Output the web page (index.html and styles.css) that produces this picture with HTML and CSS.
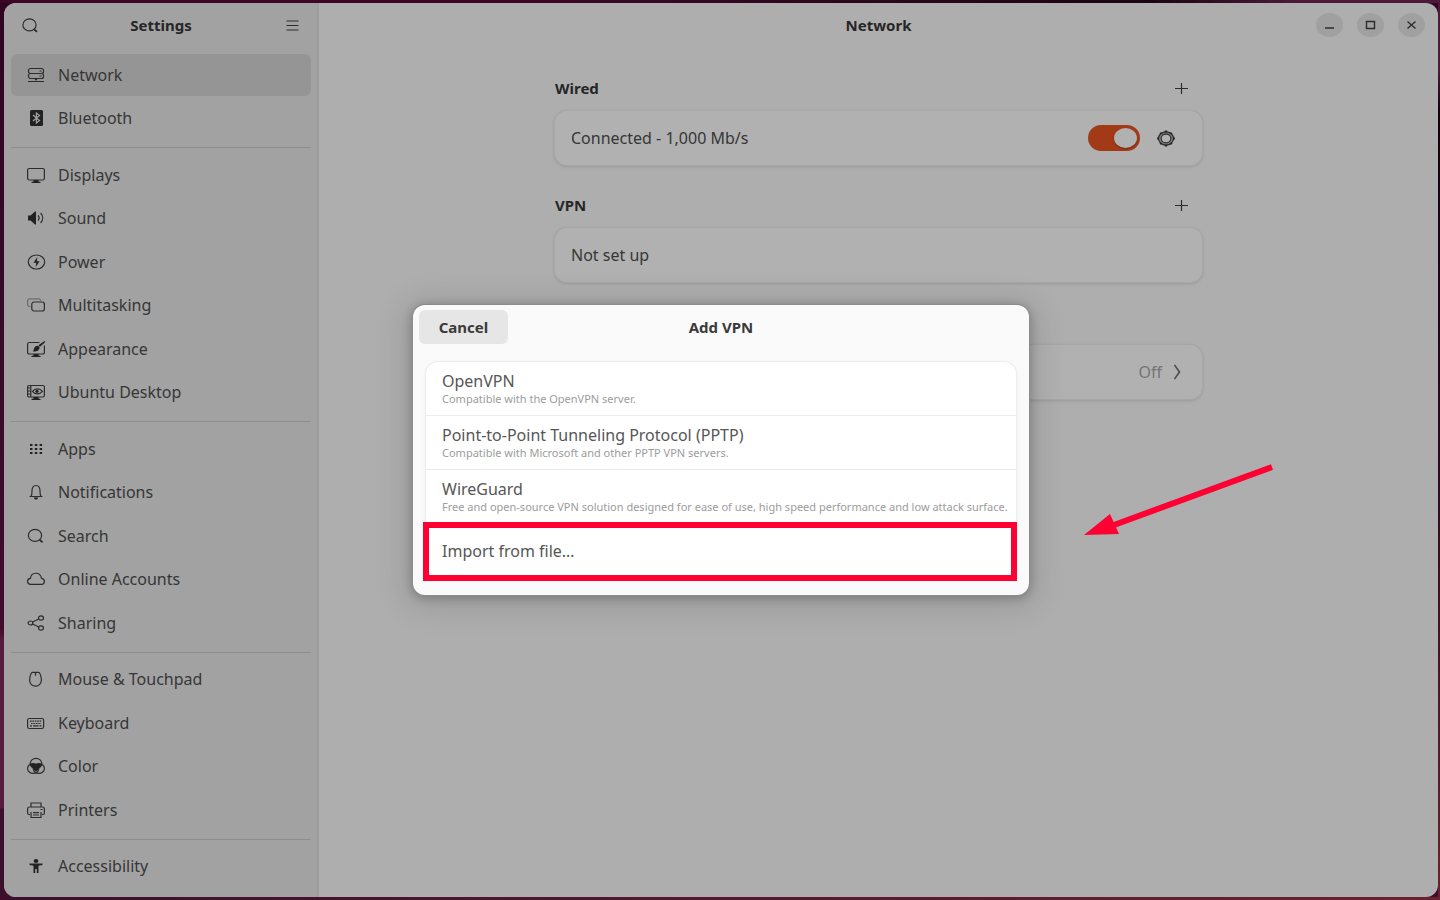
FILE: index.html
```
<!DOCTYPE html>
<html lang="en">
<head>
    <meta charset="UTF-8">
    <meta name="viewport" content="width=device-width, initial-scale=1.0">
    <title>Settings - Network</title>
    <link rel="stylesheet" href="styles.css">
</head>
<body>
    <div class="window">
        <aside class="sidebar">
            <header class="sidebar-header">
                <button class="icon-btn" aria-label="Search settings">
                    <svg class="icon" viewBox="0 0 20 20"><ellipse cx="9.5" cy="9.9" rx="6.6" ry="6"/><path d="M14 14.300l3 2.600" stroke-width="1.8"/></svg>
                </button>
                <h1>Settings</h1>
                <button class="icon-btn" aria-label="Main menu">
                    <svg class="icon" viewBox="0 0 20 20"><path d="M4.5 6h12M4.5 10.500h12M4.5 15h12"/></svg>
                </button>
            </header>
            <nav class="nav">
                <a class="nav-item active" href="#">
                    <svg class="icon" viewBox="0 0 20 20"><rect x="2.500" y="3.500" width="15" height="5" rx="2"/><rect x="2.500" y="8.500" width="15" height="5" rx="2"/><path d="M13.500 6h2M13.500 11h2M2 16.500h16"/><path class="solid" d="M8.500 14h3l-1.500 1.700z"/></svg>
                    Network
                </a>
                <a class="nav-item" href="#">
                    <svg class="icon" viewBox="0 0 20 20"><rect class="solid" x="4" y="2" width="13" height="16" rx="1.5"/><path class="knock" d="M7 7l6.5 5.5L10.4 15V5l3.1 2.5L7 13"/></svg>
                    Bluetooth
                </a>
                <hr>
                <a class="nav-item" href="#">
                    <svg class="icon" viewBox="0 0 20 20"><rect x="1.6" y="3.5" width="16.8" height="11.5" rx="1.8"/><path class="solid" d="M7.5 15h5v1.5l2 .5v1h-9v-1l2-.5z"/></svg>
                    Displays
                </a>
                <a class="nav-item" href="#">
                    <svg class="icon" viewBox="0 0 20 20"><path class="solid" d="M2 7.5h2.5L9 3.5h1v13H9l-4.500-4H2z"/><path d="M12 7.300c1.300 1.600 1.300 3.800 0 5.400M14.600 5c2.800 3 2.800 7 0 10"/></svg>
                    Sound
                </a>
                <a class="nav-item" href="#">
                    <svg class="icon" viewBox="0 0 20 20"><ellipse cx="10.500" cy="10" rx="8.200" ry="7"/><path class="solid" d="M11.300 5L7.500 10.800h2.700L9.800 15l3.700-5.800h-2.600z"/></svg>
                    Power
                </a>
                <a class="nav-item" href="#">
                    <svg class="icon" viewBox="0 0 20 20"><path class="faint" d="M4.500 11.500H3.600a2 2 0 0 1-2-2V5.800a2 2 0 0 1 2-2h9a2 2 0 0 1 2 2"/><rect x="5.800" y="7" width="12.600" height="9" rx="2.200"/></svg>
                    Multitasking
                </a>
                <a class="nav-item" href="#">
                    <svg class="icon" viewBox="0 0 20 20"><path d="M13.500 3.500H3.400a1.800 1.800 0 0 0-1.800 1.800v7.900A1.800 1.800 0 0 0 3.400 15h13.200a1.800 1.800 0 0 0 1.800-1.800V6.500"/><path class="solid" d="M7.500 15h5v1.500l2 .5v1h-9v-1l2-.5zM18.500 2l.8 1-5.300 4.800-1.600-1.500zM12 6.800l1.600 1.500c0 3-3 4.700-7 4.200 1.500-1 .8-2 1.600-3.600.8-1.500 2.200-2.200 3.800-2.100z"/></svg>
                    Appearance
                </a>
                <a class="nav-item" href="#">
                    <svg class="icon" viewBox="0 0 20 20"><rect x="1.600" y="3.500" width="16.800" height="11.500" rx="1.500"/><path d="M4.800 3.500V15M2 6h3M2 9h3M2 12h3M6.500 9.300c2.300-3.300 7.200-3.300 10 0-2.800 3.300-7.700 3.300-10 0z"/><circle class="solid" cx="11" cy="9.300" r="1.600"/><path class="solid" d="M7.500 15h5v1.500l2 .5v1h-9v-1l2-.5z"/></svg>
                    Ubuntu Desktop
                </a>
                <hr>
                <a class="nav-item" href="#">
                    <svg class="icon" viewBox="0 0 20 20"><path class="solid" d="M4 5h2.500v2H4zM8.800 5h2.500v2H8.800zM13.600 5h2.500v2h-2.500zM4 9h2.500v2H4zM8.800 9h2.500v2H8.800zM13.600 9h2.500v2h-2.500zM4 13h2.500v2H4zM8.800 13h2.500v2H8.800zM13.600 13h2.500v2h-2.500z"/></svg>
                    Apps
                </a>
                <a class="nav-item" href="#">
                    <svg class="icon" viewBox="0 0 20 20"><path d="M3.500 14.500h13M5 14.300c1-1.300 1-2.800 1-5.300C6 5.500 7.500 3.500 10 3.500S14 5.500 14 9c0 2.500 0 4 1 5.300"/><path class="solid" d="M7.800 15.500h4.400c-.3 1.400-1.100 2-2.200 2s-1.900-.6-2.200-2z"/></svg>
                    Notifications
                </a>
                <a class="nav-item" href="#">
                    <svg class="icon" viewBox="0 0 20 20"><ellipse cx="9" cy="9.400" rx="6.600" ry="6"/><path d="M13.600 13.800l3 2.600" stroke-width="1.800"/></svg>
                    Search
                </a>
                <a class="nav-item" href="#">
                    <svg class="icon" viewBox="0 0 20 20"><path d="M4.800 15.300c-4.200 0-4.400-5.600-.3-6 .5-6.500 9.800-7 11 0 4 .5 3.800 6 0 6z"/></svg>
                    Online Accounts
                </a>
                <a class="nav-item" href="#">
                    <svg class="icon" viewBox="0 0 20 20"><ellipse cx="4.500" cy="10" rx="2.300" ry="2"/><ellipse cx="15" cy="5" rx="2.500" ry="2.100"/><ellipse cx="15" cy="15" rx="2.500" ry="2.100"/><path d="M6.600 9L12.800 6M6.600 11l6.200 3"/></svg>
                    Sharing
                </a>
                <hr>
                <a class="nav-item" href="#">
                    <svg class="icon" viewBox="0 0 20 20"><path d="M6.500 3.300h6c1.400 0 2.300 2.500 2.900 7.200.2 4-2.400 6.700-5.900 6.700s-6.100-2.700-5.900-6.700c.6-4.700 1.500-7.200 2.900-7.200zM9.500 3.300v3.500"/></svg>
                    Mouse &amp; Touchpad
                </a>
                <a class="nav-item" href="#">
                    <svg class="icon" viewBox="0 0 20 20"><rect x="1.600" y="5.500" width="16" height="10" rx="1.800"/><path d="M4 8.200h11.500" stroke-dasharray="1.600 .8"/><path d="M5 10.500h10" stroke-dasharray="1.600 .8"/><path d="M4 12.900h2M7 12.900h5.500M13.500 12.900h2"/></svg>
                    Keyboard
                </a>
                <a class="nav-item" href="#">
                    <svg class="icon" viewBox="0 0 20 20"><ellipse cx="10" cy="7.500" rx="5.800" ry="5.200"/><ellipse cx="7.200" cy="12.500" rx="5.600" ry="4.900"/><ellipse cx="12.800" cy="12.500" rx="5.600" ry="4.900"/><path class="solid" d="M4.500 8c3-.8 4.500-.2 5.500.5 1-.7 2.500-1.300 5.500-.5-.5 2-1.600 3.400-3 4-.2 1.500-1 2.500-2.500 3.600-1.500-1.100-2.300-2.100-2.500-3.600-1.400-.6-2.500-2-3-4z"/></svg>
                    Color
                </a>
                <a class="nav-item" href="#">
                    <svg class="icon" viewBox="0 0 20 20"><path d="M5 7V3h10v4M4 14.500H3c-.9 0-1.400-.6-1.400-1.500V9c0-1.200.7-2 2-2h12.800c1.300 0 2 .8 2 2v4c0 .9-.5 1.500-1.400 1.500h-1M5 12v5.500h10V12M7 12.700h6M7 15h6"/><path class="solid" d="M14.500 9h2v1h-2z"/></svg>
                    Printers
                </a>
                <hr>
                <a class="nav-item" href="#">
                    <svg class="icon" viewBox="0 0 20 20"><ellipse class="solid" cx="10" cy="5" rx="2.400" ry="2.100"/><path class="solid" d="M3.500 7.500h13V9l-4 .8V17h-1.700v-4H9.200v4H7.500V9.800l-4-.8z"/></svg>
                    Accessibility
                </a>
            </nav>
        </aside>

        <main class="main">
            <header class="main-header">
                <h2>Network</h2>
                <div class="window-controls">
                    <button aria-label="Minimize"><svg viewBox="0 0 27 24"><path d="M9 15h9"/></svg></button>
                    <button aria-label="Maximize"><svg viewBox="0 0 27 24"><path d="M9.500 8.500h8v7h-8z"/></svg></button>
                    <button aria-label="Close"><svg viewBox="0 0 27 24"><path d="M9.500 8.500l8 7M17.500 8.500l-8 7"/></svg></button>
                </div>
            </header>
            <div class="content">
                <section>
                    <div class="section-head">
                        <h3>Wired</h3>
                        <button class="icon-btn" aria-label="Add wired connection"><svg class="icon" viewBox="0 0 20 20"><path d="M4 10.500h13M10.500 5v11"/></svg></button>
                    </div>
                    <div class="card">
                        <label for="wired">Connected - 1,000 Mb/s</label>
                        <input class="switch" type="checkbox" id="wired" checked>
                        <button class="icon-btn" aria-label="Wired options">
                            <svg class="icon" viewBox="0 0 20 20"><ellipse class="ring" cx="10" cy="10.500" rx="6.300" ry="5.600"/><ellipse cx="10" cy="10.500" rx="7.500" ry="6.700"/><ellipse cx="10" cy="10.500" rx="4.900" ry="4.300"/><path class="solid" d="M9 2.500h2l.5 1.800h-3zM9 18.500h2l.5-1.800h-3zM1.200 9.600l1.700-.5v2.800l-1.700-.5zM18.800 9.600l-1.700-.5v2.800l1.700-.5zM3.500 5.500l1.300-1.300 1.700.9-1.800 1.600zM16.500 5.500l-1.300-1.300-1.700.9 1.800 1.600zM3.500 15.500l1.300 1.300 1.700-.9-1.800-1.600zM16.500 15.500l-1.300 1.300-1.700-.9 1.800-1.600z"/></svg>
                        </button>
                    </div>
                </section>
                <section>
                    <div class="section-head">
                        <h3>VPN</h3>
                        <button class="icon-btn" aria-label="Add VPN"><svg class="icon" viewBox="0 0 20 20"><path d="M4 10.500h13M10.500 5v11"/></svg></button>
                    </div>
                    <div class="card">Not set up</div>
                </section>
                <section class="proxy">
                    <a class="card" href="#">
                        <span class="value">Off</span>
                        <svg class="icon" viewBox="0 0 20 20"><path d="M7.500 3l5 7-5 7" stroke-width="1.600"/></svg>
                    </a>
                </section>
            </div>
        </main>

        <div class="overlay">
            <div class="dialog" role="dialog" aria-labelledby="dialog-title">
                <header class="dialog-header">
                    <button class="cancel">Cancel</button>
                    <h2 id="dialog-title">Add VPN</h2>
                </header>
                <div class="options">
                    <button class="option">
                        OpenVPN
                        <small>Compatible with the OpenVPN server.</small>
                    </button>
                    <button class="option">
                        Point-to-Point Tunneling Protocol (PPTP)
                        <small>Compatible with Microsoft and other PPTP VPN servers.</small>
                    </button>
                    <button class="option">
                        WireGuard
                        <small>Free and open-source VPN solution designed for ease of use, high speed performance and low attack surface.</small>
                    </button>
                    <button class="option highlight">Import from file…</button>
                </div>
                <svg class="arrow" viewBox="0 0 190 74"><path d="M30 61L188 3" stroke="#ff0033" stroke-width="6"/><path d="M0 71l26-21 9 20z" fill="#ff0033"/></svg>
            </div>
        </div>
    </div>
</body>
</html>
```
FILE: styles.css
```
* {
    box-sizing: border-box;
}

body {
    margin: 0;
    padding: 3px 2px 3px 4px;
    height: 100vh;
    min-height: 820px;
    font-family: "Noto Sans", sans-serif;
    font-size: 16px;
    line-height: 20px;
    color: #363636;
    background:
        linear-gradient(90deg, #3a0824, #3a0824 40%, #1c0512 80%, #4c1a38 90%) top / 100% 3px no-repeat,
        linear-gradient(#4c1a38 70px, #12020c 110px, #2a0a1c 50%, #6a2232) right / 2px 100% no-repeat,
        linear-gradient(90deg, #3c0f2a, #6a2232) bottom / 100% 3px no-repeat,
        linear-gradient(#300520, #420d2b 630px, #571a3d 640px, #571a3d 808px, #3c0f2a 809px);
}

h1, h2, h3 {
    margin: 0;
    font-size: 15px;
    font-weight: 700;
    color: #262626;
}

button {
    padding: 0;
    border: none;
    background: none;
    font: inherit;
    color: inherit;
    cursor: pointer;
}

a {
    color: inherit;
    text-decoration: none;
}

.icon {
    display: block;
    flex: none;
    width: 20px;
    height: 20px;
    fill: none;
    stroke: #2c2c2c;
    stroke-width: 1.2;
}

.icon .solid {
    fill: #222;
    stroke: none;
}

.icon .knock {
    stroke: #a2a2a2;
}

.icon .faint {
    stroke: #6c6c6c;
}

.icon .ring {
    stroke: #808080;
    stroke-width: 2;
}

.icon-btn {
    display: grid;
    place-items: center;
    width: 36px;
    height: 34px;
}

.window {
    position: relative;
    display: flex;
    height: 100%;
    border-radius: 12px;
    overflow: hidden;
    background: #aeaeae;
}

/* Sidebar */
.sidebar {
    display: flex;
    flex-direction: column;
    flex: none;
    width: 315px;
    background: #a2a2a2;
    border-right: 2px solid #9c9c9c;
}

.sidebar-header {
    display: flex;
    align-items: center;
    justify-content: space-between;
    height: 44px;
    padding: 0 7px 0 8px;
}

.nav {
    display: flex;
    flex-direction: column;
    flex: 1;
    padding: 6px 6px 9px 7px;
}

.nav-item {
    display: flex;
    align-items: center;
    flex: 1;
    gap: 12px;
    margin: 1px 0;
    padding: 0 15px;
    border-radius: 6px;
}

.nav-item.active {
    background: #959595;
}

.nav hr {
    width: 100%;
    height: 1px;
    margin: 7px 0 5px;
    border: none;
    background: #8e8e8e;
}

/* Network page */
.main {
    flex: 1;
}

.main-header {
    display: grid;
    grid-template-columns: 1fr auto 1fr;
    align-items: center;
    height: 44px;
    padding: 0 13px;
}

.main-header h2 {
    grid-column: 2;
}

.window-controls {
    display: flex;
    justify-content: flex-end;
    gap: 14px;
}

.window-controls button {
    width: 27px;
    height: 24px;
    border-radius: 50%;
    background: #a0a0a0;
}

.window-controls svg {
    display: block;
    fill: none;
    stroke: #2c2c2c;
    stroke-width: 1.4;
}

.content {
    display: flex;
    flex-direction: column;
    gap: 17px;
    max-width: 647px;
    margin: 0 auto;
    padding-top: 18px;
}

.section-head {
    display: flex;
    align-items: center;
    justify-content: space-between;
    height: 46px;
    padding-right: 3px;
}

.card {
    display: flex;
    align-items: center;
    height: 54px;
    padding: 0 18px 0 16px;
    border-radius: 12px;
    background: #b1b1b1;
    box-shadow: 0 0 0 1px #a7a7a7, 0 1px 3px 1px rgba(0, 0, 0, 0.12);
}

.card label {
    flex: 1;
}

.switch {
    appearance: none;
    width: 52px;
    height: 26px;
    margin: 0 8px 0 0;
    padding: 3px;
    border-radius: 13px;
    background: #888;
    cursor: pointer;
}

.switch::before {
    content: "";
    display: block;
    width: 23px;
    height: 20px;
    border-radius: 50%;
    background: #b1b1b1;
    box-shadow: 0 1px 2px rgba(0, 0, 0, 0.3);
}

.switch:checked {
    background: #a33a17;
}

.switch:checked::before {
    margin-left: auto;
}

.proxy {
    padding-top: 46px;
}

.proxy .card {
    justify-content: flex-end;
    gap: 5px;
    padding-right: 15px;
}

.value {
    color: #747474;
}

.proxy .icon {
    stroke: #4c4c4c;
}

/* Add VPN dialog */
.overlay {
    position: absolute;
    inset: 0;
    display: grid;
    place-items: center;
}

.dialog {
    position: relative;
    width: 616px;
    padding-bottom: 17px;
    border-radius: 12px;
    background: #fafafa;
    box-shadow: 0 0 0 1px #8c8c8c, 0 2px 10px 2px rgba(0, 0, 0, 0.2), 0 4px 32px 8px rgba(0, 0, 0, 0.12);
}

.dialog-header {
    display: grid;
    grid-template-columns: 1fr auto 1fr;
    align-items: center;
    padding: 5px 6px;
}

.dialog h2,
.cancel {
    color: #3a3a3a;
}

.cancel {
    justify-self: start;
    width: 89px;
    height: 34px;
    border-radius: 6px;
    background: #e6e6e6;
    font-size: 15px;
    font-weight: 700;
}

.options {
    margin: 13px 13px 0;
    border-radius: 12px;
    background: #fff;
    box-shadow: 0 0 0 1px #ededed, 0 1px 3px 1px rgba(0, 0, 0, 0.06);
}

.option {
    display: block;
    width: 100%;
    height: 54px;
    padding: 0 16px;
    border-bottom: 1px solid #ebebeb;
    text-align: left;
    color: #565656;
}

.option small {
    display: block;
    font-size: 11px;
    line-height: 16px;
    white-space: nowrap;
    color: #9c9c9c;
}

.option.highlight {
    position: relative;
    border-bottom: none;
}

.option.highlight::after {
    content: "";
    position: absolute;
    inset: -2px -1px -3px -3px;
    border: 6px solid #ff0033;
}

.arrow {
    position: absolute;
    top: 159px;
    left: calc(100% + 55px);
    width: 190px;
    height: 74px;
    fill: none;
}
```
